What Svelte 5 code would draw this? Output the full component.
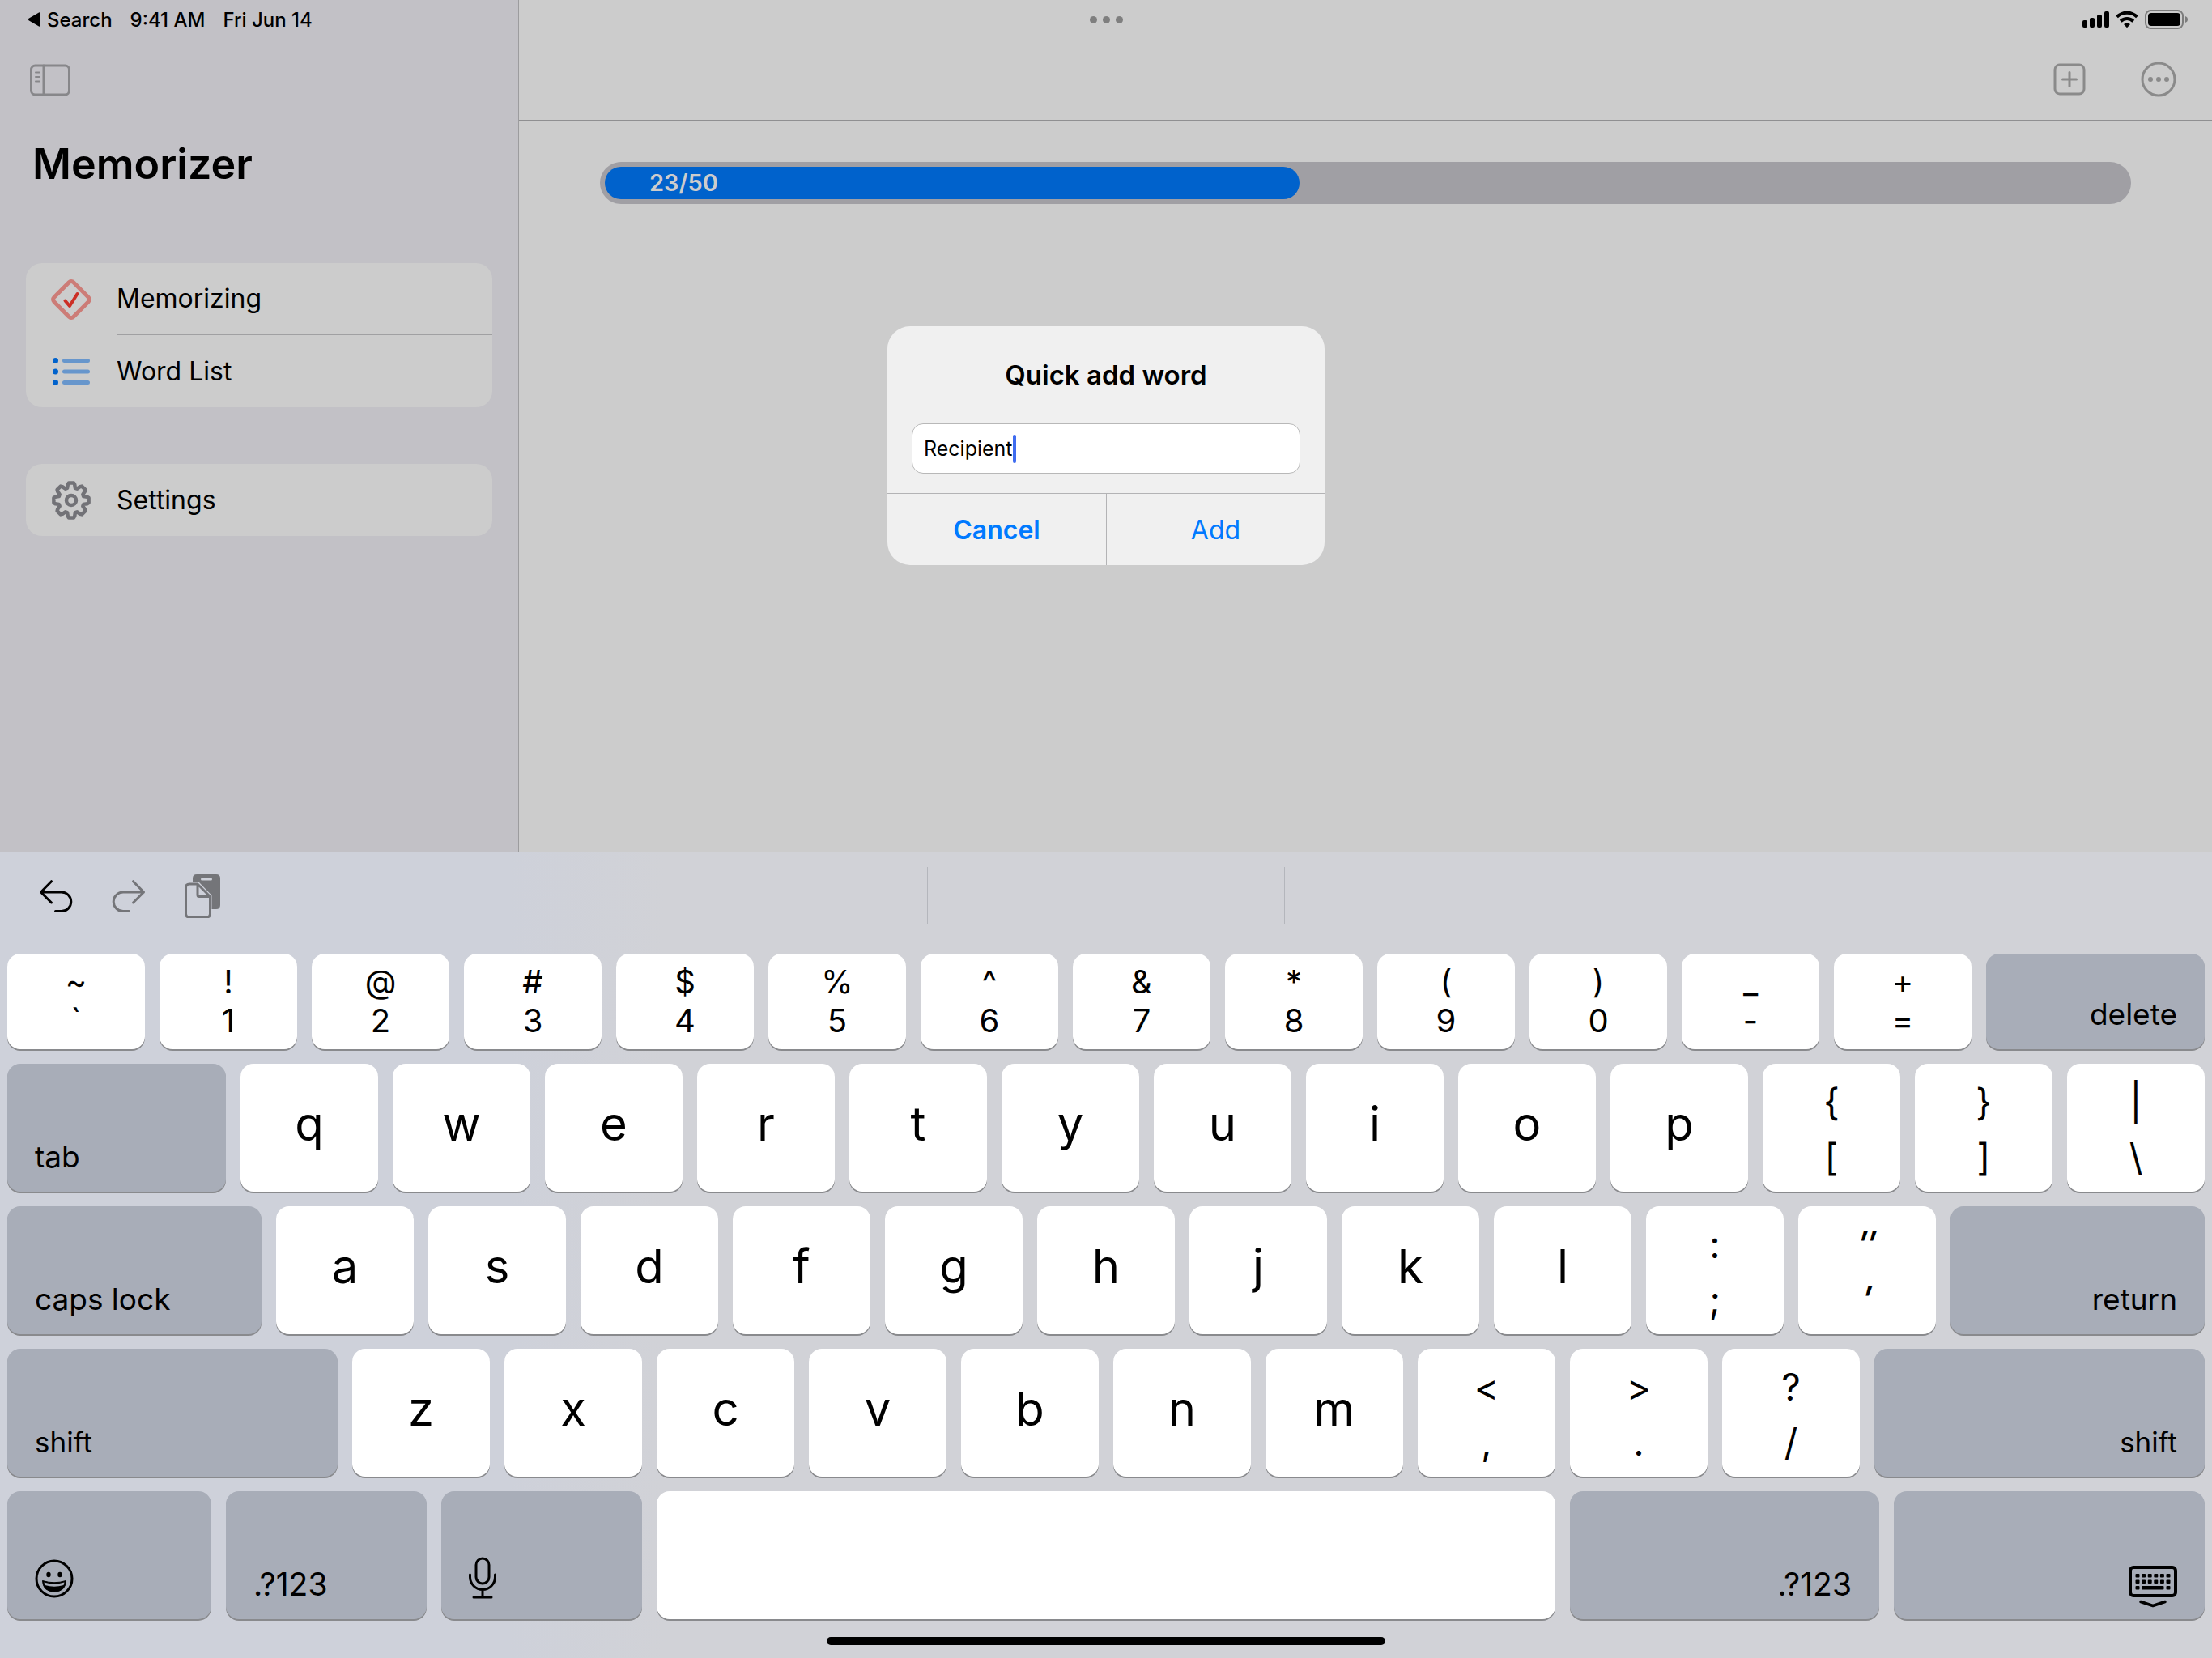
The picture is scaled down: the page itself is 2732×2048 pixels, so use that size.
<script>
  const done = 23;
  const total = 50;
  let word = $state('Recipient');

  const letters = (s) => [...s].map((c) => ({ kind: 'letter', label: c, w: 170 }));
  const pairs = (list) => list.map(([top, bottom]) => ({ kind: 'pair', top, bottom, w: 170 }));
  const mod = (label, w, side = 'left', size = '') => ({ kind: 'mod', label, w, side, size });
  const glyph = (icon, label, w, side = 'left') => ({ kind: 'icon', icon, label, w, side });

  const rows = [
    {
      short: true,
      keys: [
        ...pairs([
          ['~', '`'], ['!', '1'], ['@', '2'], ['#', '3'], ['$', '4'], ['%', '5'], ['^', '6'],
          ['&', '7'], ['*', '8'], ['(', '9'], [')', '0'], ['_', '-'], ['+', '='],
        ]),
        mod('delete', 270, 'right'),
      ],
    },
    { keys: [mod('tab', 270), ...letters('qwertyuiop'), ...pairs([['{', '['], ['}', ']'], ['|', '\\']])] },
    { keys: [mod('caps lock', 314), ...letters('asdfghjkl'), ...pairs([[':', ';'], ['″', '′']]), mod('return', 314, 'right')] },
    {
      keys: [
        mod('shift', 408, 'left', 'small'),
        ...letters('zxcvbnm'),
        ...pairs([['<', ','], ['>', '.'], ['?', '/']]),
        mod('shift', 408, 'right', 'small'),
      ],
    },
    {
      keys: [
        glyph('emoji', 'Emoji', 252),
        mod('.?123', 248, 'left', 'large'),
        glyph('mic', 'Dictate', 248),
        { kind: 'space', w: 1110 },
        mod('.?123', 382, 'right', 'large'),
        glyph('hide', 'Hide keyboard', 384, 'right'),
      ],
    },
  ];

  const columns = (keys) => keys.map((k) => `minmax(0, ${k.w}fr)`).join(' ');

  // Outline of an eight-toothed gear centred on (25, 25).
  function gear() {
    const pts = [];
    for (let i = 0; i < 8; i++) {
      for (const [r, a] of [[16, -18], [20, -12], [21.8, -8], [21.8, 8], [20, 12], [16, 18]]) {
        const t = ((i * 45 + a - 90) * Math.PI) / 180;
        pts.push(`${(25 + r * Math.cos(t)).toFixed(1)} ${(25 + r * Math.sin(t)).toFixed(1)}`);
      }
    }
    return `M${pts.join('L')}Z`;
  }
</script>

<div class="screen">
  <div class="app">
    <header class="status">
      <div class="status-left">
        <a class="back" href="#search">
          <svg width="16" height="20" viewBox="0 0 16 20"><path d="M1.500 8.800 14 1.400Q15.500.8 15.500 2.500V17.500Q15.500 19.200 14 18.600L1.500 11.200Q0 10 1.500 8.800Z" /></svg>
          <span>Search</span>
        </a>
        <span>9:41 AM</span>
        <span>Fri Jun 14</span>
      </div>
      <button class="dots" aria-label="Multitasking"><i></i><i></i><i></i></button>
      <div class="status-right">
        <svg width="130" height="24" viewBox="0 0 130 24">
          <rect x="0" y="13" width="6" height="9" rx="2" />
          <rect x="9" y="10" width="6" height="12" rx="2" />
          <rect x="18" y="6" width="6" height="16" rx="2" />
          <rect x="27" y="2" width="6" height="20" rx="2" />
          <g fill="none" stroke="#000" stroke-width="4">
            <path d="M42.500 8.800a18 18 0 0 1 25 0" />
            <path d="M47.200 14.200a11.200 11.200 0 0 1 15.600 0" />
          </g>
          <path d="M55 22.300l-4-4.300a6 6 0 0 1 8 0z" />
          <rect x="78" y="1" width="46" height="22" rx="6.500" fill="none" stroke="#7c7c7c" stroke-width="2" />
          <rect x="81" y="4" width="40" height="16" rx="4" />
          <path d="M127 8q3 1.200 3 4t-3 4z" fill="#7c7c7c" />
        </svg>
      </div>
    </header>

    <aside class="sidebar">
      <button class="icon-button" aria-label="Toggle sidebar">
        <svg width="50" height="40" viewBox="0 0 50 40" fill="none" stroke="#87878a" stroke-width="3" stroke-linecap="round">
          <rect x="1.500" y="2" width="47" height="36" rx="5" />
          <path d="M17 2v36" />
          <path d="M7 10.500h5M7 16h5M7 21.500h5" stroke-width="2" />
        </svg>
      </button>
      <h1>Memorizer</h1>
      <nav>
        <ul class="group">
          <li>
            <a href="#memorizing">
              <svg width="50" height="50" viewBox="0 0 50 50" fill="none" stroke-linecap="round" stroke-linejoin="round">
                <rect x="8" y="8" width="34" height="34" rx="4" transform="rotate(45 25 25)" stroke="#cc7c77" stroke-width="5" />
                <path d="M17.500 26.500l5.500 6.500L32.500 18" stroke="#cc2f26" stroke-width="4" />
              </svg>
              <span>Memorizing</span>
            </a>
          </li>
          <li>
            <a href="#words">
              <svg width="50" height="50" viewBox="0 0 50 50">
                <g fill="#0062cc"><circle cx="5.500" cy="11.500" r="3.500" /><circle cx="5.500" cy="25" r="3.500" /><circle cx="5.500" cy="38.500" r="3.500" /></g>
                <path d="M16.500 11.500h29M16.500 25h29M16.500 38.500h29" stroke="#6796cc" stroke-width="5" stroke-linecap="round" />
              </svg>
              <span>Word List</span>
            </a>
          </li>
        </ul>
        <ul class="group">
          <li>
            <a href="#settings">
              <svg width="50" height="50" viewBox="0 0 50 50" fill="none" stroke="#727277" stroke-width="4.500" stroke-linejoin="round">
                <path d={gear()} />
                <circle cx="25" cy="25" r="6" />
              </svg>
              <span>Settings</span>
            </a>
          </li>
        </ul>
      </nav>
    </aside>

    <main>
      <div class="toolbar">
        <button class="icon-button" aria-label="Add word">
          <svg width="44" height="44" viewBox="0 0 44 44" fill="none" stroke="#8a8a8a" stroke-width="3" stroke-linecap="round">
            <rect x="4" y="4" width="36" height="36" rx="6" />
            <path d="M22 13.500v17M13.500 22h17" />
          </svg>
        </button>
        <button class="icon-button" aria-label="More">
          <svg width="44" height="44" viewBox="0 0 44 44">
            <circle cx="22" cy="22" r="20" fill="none" stroke="#8a8a8a" stroke-width="3" />
            <g fill="#8a8a8a"><circle cx="12" cy="22" r="3" /><circle cx="22" cy="22" r="3" /><circle cx="32" cy="22" r="3" /></g>
          </svg>
        </button>
      </div>
      <div class="content">
        <div class="track">
          <div class="fill" style:width="{(done / total) * 100}%">{done}/{total}</div>
        </div>
      </div>
    </main>

    <form class="alert" role="dialog" aria-labelledby="alert-title" onsubmit={(e) => e.preventDefault()}>
      <h2 id="alert-title">Quick add word</h2>
      <label class="field">
        <input type="text" aria-label="Word" bind:value={word} />
        <span class="caret"></span>
      </label>
      <div class="actions">
        <button type="button" class="cancel">Cancel</button>
        <button type="submit" class="add">Add</button>
      </div>
    </form>
  </div>

  <section class="keyboard" aria-label="Keyboard">
    <div class="shortcuts">
      <div class="edit">
        <button aria-label="Undo">
          <svg width="44" height="56" viewBox="0 0 44 56" fill="none" stroke="#000" stroke-width="3" stroke-linecap="round" stroke-linejoin="round">
            <path d="M15.500 10.700 2.500 24l13 13M2.500 24H28a11.800 11.800 0 0 1 0 23.600H20.500" />
          </svg>
        </button>
        <button aria-label="Redo">
          <svg width="44" height="56" viewBox="0 0 44 56" fill="none" stroke="#747579" stroke-width="3" stroke-linecap="round" stroke-linejoin="round">
            <path d="M26.500 10.700l13 13.300-13 13M39.500 24H14a11.800 11.800 0 0 0 0 23.600H21.500" />
          </svg>
        </button>
        <button aria-label="Paste">
          <svg width="44" height="56" viewBox="0 0 44 56">
            <path d="M10 12V7q0-5 5-5h24q5 0 5 5v33q0 5-5 5h-5.500V28L18 12z" fill="#747579" />
            <path d="M21.500 8h11" stroke="#ced1da" stroke-width="3" stroke-linecap="round" />
            <path d="M16 14H6q-4.500 0-4.500 4.500v32q0 4.500 4.500 4.500h21q4.500 0 4.500-4.500V29.500zM16 14v13.500q0 2 2 2h13.500" fill="#ced1da" stroke="#747579" stroke-width="3" stroke-linejoin="round" />
          </svg>
        </button>
      </div>
      <div class="suggestion"></div>
    </div>

    {#each rows as row}
      <div class="row" class:short={row.short} style:grid-template-columns={columns(row.keys)}>
        {#each row.keys as key}
          <button
            class="key {key.kind} {key.size ?? ''}"
            class:right={key.side === 'right'}
            class:slanted={key.top === '″'}
            aria-label={key.kind === 'space' ? 'space' : key.kind === 'icon' ? key.label : undefined}
          >
            {#if key.kind === 'pair'}
              <span>{key.top}</span><span>{key.bottom}</span>
            {:else if key.icon === 'emoji'}
              <svg width="48" height="50" viewBox="0 0 48 50">
                <circle cx="24" cy="25" r="22" fill="none" stroke="#000" stroke-width="3" />
                <ellipse cx="17" cy="20" rx="2.700" ry="3.300" /><ellipse cx="31" cy="20" rx="2.700" ry="3.300" />
                <path d="M9.500 27.500Q24 32 38.500 27.500 38 41 24 41T9.500 27.500Z" fill="#000" stroke="#000" stroke-linejoin="round" />
                <path d="M11.500 29.500Q24 33.500 36.500 29.500L35.500 33Q24 36.500 12.500 33Z" fill="#a8adb8" />
              </svg>
            {:else if key.icon === 'mic'}
              <svg width="34" height="52" viewBox="0 0 34 52" fill="none" stroke="#000" stroke-width="3" stroke-linecap="round">
                <rect x="9" y="2" width="16" height="31" rx="8" />
                <path d="M1.500 22v3a15.500 15.500 0 0 0 31 0v-3M17 41v9M6 50h22" />
              </svg>
            {:else if key.icon === 'hide'}
              <svg width="60" height="52" viewBox="0 0 60 52">
                <rect x="2" y="2" width="56" height="35" rx="4" fill="none" stroke="#000" stroke-width="4" />
                {#each [0, 1, 2, 3, 4, 5] as i}
                  <rect x={8.5 + i * 7.6} y="10" width="5" height="4.500" rx="1" />
                  <rect x={8.5 + i * 7.6} y="17.500" width="5" height="4.500" rx="1" />
                {/each}
                <rect x="8.500" y="25" width="5" height="4.500" rx="1" />
                <rect x="16" y="25" width="27.500" height="4.500" rx="1" />
                <rect x="46.500" y="25" width="5" height="4.500" rx="1" />
                <path d="M15 44.500l15 5 15-5" fill="none" stroke="#000" stroke-width="3.500" stroke-linecap="round" stroke-linejoin="round" />
              </svg>
            {:else if key.label}
              {key.label}
            {/if}
          </button>
        {/each}
      </div>
    {/each}
    <div class="home"></div>
  </section>
</div>

<style>
  :global(body) {
    background: #ccc;
  }
  .screen {
    display: flex;
    flex-direction: column;
    min-height: 100vh;
    font-family: Inter, 'Liberation Sans', sans-serif;
    color: #000;
  }
  .screen * {
    box-sizing: border-box;
  }
  button {
    padding: 0;
    border: 0;
    background: none;
    font: inherit;
    color: inherit;
  }
  svg {
    display: block;
    flex: none;
  }
  a {
    color: inherit;
    text-decoration: none;
  }

  .app {
    position: relative;
    flex: 1;
    display: grid;
    grid-template-columns: 641px 1fr;
    grid-template-rows: 48px 1fr;
  }
  .status {
    grid-area: 1 / 1 / 2 / 3;
    z-index: 1;
    display: grid;
    grid-template-columns: 1fr auto 1fr;
    align-items: center;
    padding: 0 30px;
    font-size: 24px;
    font-weight: 500;
  }
  .status-left,
  .back {
    display: flex;
    align-items: center;
  }
  .status-left {
    gap: 22px;
    padding-left: 4px;
  }
  .back {
    gap: 8px;
  }
  .status-right {
    display: flex;
    justify-content: flex-end;
  }
  .dots {
    display: flex;
    gap: 7px;
  }
  .dots i {
    width: 9px;
    height: 9px;
    border-radius: 50%;
    background: #7f7f7f;
  }

  .sidebar {
    grid-area: 1 / 1 / 3 / 2;
    padding: 76px 32px 0;
    background: #c2c1c6;
    border-right: 1px solid #9c9c9e;
  }
  .sidebar .icon-button {
    display: block;
    margin: 3px 5px 0;
  }
  h1 {
    margin: 48px 0 0 8px;
    font-size: 52px;
    font-weight: 600;
    line-height: 72px;
  }
  nav {
    display: flex;
    flex-direction: column;
    gap: 70px;
    margin-top: 86px;
  }
  .group {
    margin: 0;
    padding: 0;
    list-style: none;
    background: #ccc;
    border-radius: 20px;
  }
  .group a {
    display: flex;
    align-items: center;
    gap: 31px;
    height: 89px;
    padding-left: 31px;
    font-size: 32px;
  }
  .group span {
    flex: 1;
    line-height: 88px;
  }
  .group li:not(:last-child) span {
    border-bottom: 1px solid #a0a0a2;
  }

  main {
    grid-area: 1 / 2 / 3 / 3;
    padding-top: 48px;
    background: #ccc;
  }
  .toolbar {
    display: flex;
    justify-content: flex-end;
    align-items: center;
    gap: 66px;
    height: 101px;
    padding-right: 44px;
    border-bottom: 1px solid #8f8f91;
  }
  .content {
    padding: 51px 100px;
  }
  .track {
    height: 52px;
    padding: 6px 20px 6px 6px;
    border-radius: 26px;
    background: #a09fa4;
  }
  .fill {
    height: 40px;
    padding-left: 55px;
    border-radius: 20px;
    background: #0062cc;
    color: #ccc;
    font-size: 29px;
    font-weight: 600;
    line-height: 40px;
  }

  .alert {
    position: absolute;
    top: 403px;
    left: 0;
    right: 0;
    z-index: 2;
    width: 540px;
    margin: 0 auto;
    border-radius: 28px;
    background: #f0f0f0;
    overflow: hidden;
  }
  h2 {
    margin: 38px 0 0;
    font-size: 33px;
    font-weight: 600;
    line-height: 44px;
    text-align: center;
  }
  .field {
    display: flex;
    align-items: center;
    height: 62px;
    margin: 38px 30px 24px;
    padding: 0 14px;
    border: 1px solid #b8b8b8;
    border-radius: 14px;
    background: #fff;
  }
  .field input {
    field-sizing: content;
    padding: 0;
    border: 0;
    outline: 0;
    background: none;
    font: inherit;
    font-size: 25px;
    color: inherit;
  }
  .caret {
    width: 4px;
    height: 35px;
    border-radius: 2px;
    background: #3f6cf0;
  }
  .actions {
    display: grid;
    grid-template-columns: 1fr 1fr;
    border-top: 1px solid #b3b3b5;
  }
  .actions button {
    height: 88px;
    color: #007aff;
    font-size: 32px;
  }
  .actions .cancel {
    font-weight: 600;
  }
  .actions .add {
    border-left: 1px solid #b3b3b5;
  }

  .keyboard {
    display: flex;
    flex-direction: column;
    gap: 18px;
    padding: 0 9px 16px;
    background: linear-gradient(90deg, #ced1da 23%, #d1d2d7 30%);
  }
  .shortcuts {
    display: grid;
    grid-template-columns: 1fr 442px 1fr;
    align-items: center;
    height: 108px;
  }
  .edit {
    display: flex;
    gap: 46px;
    padding-left: 39px;
  }
  .suggestion {
    height: 70px;
    border: solid #b4b6bc;
    border-width: 0 1px;
  }
  .row {
    display: grid;
    gap: 18px;
    height: 158px;
  }
  .row.short {
    height: 118px;
  }
  .key {
    display: flex;
    flex-direction: column;
    align-items: center;
    justify-content: center;
    border-radius: 16px;
    background: #fff;
    box-shadow: 0 2px 0 #898a8d;
  }
  .letter {
    padding-bottom: 10px;
    font-size: 58px;
  }
  .pair {
    padding-top: 4px;
    font-size: 46px;
    line-height: 68px;
  }
  .short .pair {
    padding-top: 0;
    font-size: 40px;
    line-height: 48px;
  }
  .slanted {
    font-style: italic;
    font-weight: 500;
  }
  .mod,
  .icon {
    align-items: flex-start;
    justify-content: flex-end;
    padding: 0 34px 20px;
    background: #a8adb8;
    font-size: 37px;
    line-height: 46px;
  }
  .mod.small {
    font-size: 35px;
  }
  .mod.large {
    font-size: 39px;
  }
  .key.right {
    align-items: flex-end;
  }
  .icon {
    padding-bottom: 25px;
  }
  .icon.right {
    padding-bottom: 14px;
  }
  .home {
    align-self: center;
    width: 690px;
    height: 10px;
    margin-top: 4px;
    border-radius: 5px;
    background: #000;
  }
</style>
